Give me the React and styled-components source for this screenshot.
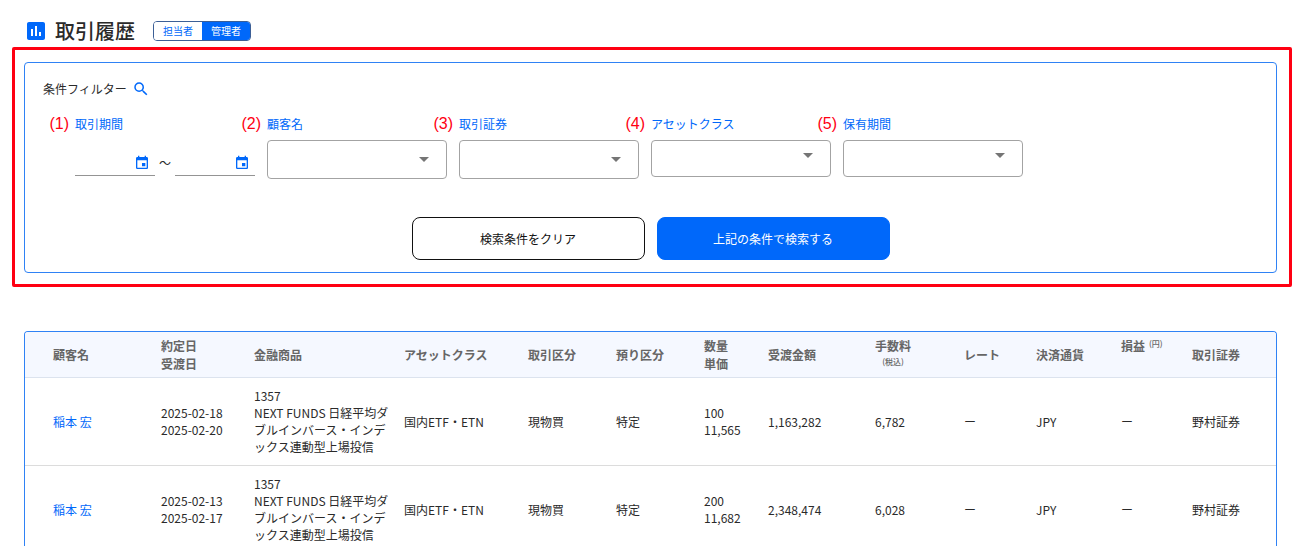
import React, { useState } from 'react';
import styled, { createGlobalStyle } from 'styled-components';
import { MdAssessment, MdSearch, MdEvent, MdArrowDropDown } from 'react-icons/md';

const SELECTS = [
  { id: 'customer', no: '(2)', label: '顧客名' },
  { id: 'broker', no: '(3)', label: '取引証券' },
  { id: 'assetClass', no: '(4)', label: 'アセットクラス', compact: true },
  { id: 'holding', no: '(5)', label: '保有期間', compact: true },
];

const COLUMNS = [128, 93, 150, 124, 88, 88, 64, 107, 89, 72, 85, 71, 92];

const TRADES = [
  {
    name: '稲本 宏',
    contractDate: '2025-02-18',
    deliveryDate: '2025-02-20',
    code: '1357',
    product: 'NEXT FUNDS 日経平均ダブルインバース・インデックス連動型上場投信',
    assetClass: '国内ETF・ETN',
    type: '現物買',
    deposit: '特定',
    quantity: '100',
    price: '11,565',
    amount: '1,163,282',
    fee: '6,782',
    rate: 'ー',
    currency: 'JPY',
    profit: 'ー',
    broker: '野村証券',
  },
  {
    name: '稲本 宏',
    contractDate: '2025-02-13',
    deliveryDate: '2025-02-17',
    code: '1357',
    product: 'NEXT FUNDS 日経平均ダブルインバース・インデックス連動型上場投信',
    assetClass: '国内ETF・ETN',
    type: '現物買',
    deposit: '特定',
    quantity: '200',
    price: '11,682',
    amount: '2,348,474',
    fee: '6,028',
    rate: 'ー',
    currency: 'JPY',
    profit: 'ー',
    broker: '野村証券',
  },
];

export default function App() {
  const [role, setRole] = useState('admin');

  return (
    <Page>
      <GlobalStyle />
      <Header>
        <MdAssessment size={24} color="#0068fa" />
        <Title>取引履歴</Title>
        <Toggle>
          <ToggleButton type="button" $active={role === 'staff'} onClick={() => setRole('staff')}>
            担当者
          </ToggleButton>
          <ToggleButton type="button" $active={role === 'admin'} onClick={() => setRole('admin')}>
            管理者
          </ToggleButton>
        </Toggle>
      </Header>
      <Frame>
        <FilterForm onSubmit={(e) => e.preventDefault()}>
          <FilterTitle>
            条件フィルター
            <MdSearch size={18} color="#0068fa" />
          </FilterTitle>
          <Fields>
            <Field>
              <Label htmlFor="dateFrom">
                <Number>(1)</Number>
                取引期間
              </Label>
              <DateRange>
                <DateInput id="dateFrom" label="開始日" />
                ～
                <DateInput id="dateTo" label="終了日" />
              </DateRange>
            </Field>
            {SELECTS.map(({ id, no, label, compact }) => (
              <Field key={id}>
                <Label htmlFor={id}>
                  <Number>{no}</Number>
                  {label}
                </Label>
                <SelectWrapper>
                  <Select id={id} $compact={compact}>
                    <option value="" />
                  </Select>
                  <Arrow size={24} $compact={compact} />
                </SelectWrapper>
              </Field>
            ))}
          </Fields>
          <Actions>
            <ActionButton type="reset">検索条件をクリア</ActionButton>
            <ActionButton type="submit" $primary>
              上記の条件で検索する
            </ActionButton>
          </Actions>
        </FilterForm>
      </Frame>
      <TableWrapper>
        <Table>
          <colgroup>
            {COLUMNS.map((width, i) => (
              <Col key={i} $width={width} />
            ))}
          </colgroup>
          <thead>
            <tr>
              <Th>顧客名</Th>
              <Th>
                約定日
                <br />
                受渡日
              </Th>
              <Th>金融商品</Th>
              <Th>アセットクラス</Th>
              <Th>取引区分</Th>
              <Th>預り区分</Th>
              <Th>
                数量
                <br />
                単価
              </Th>
              <Th>受渡金額</Th>
              <Th $top>
                <Stack>
                  手数料
                  <Small>(税込)</Small>
                </Stack>
              </Th>
              <Th>レート</Th>
              <Th>決済通貨</Th>
              <Th $top>
                <Inline>
                  損益
                  <Small>(円)</Small>
                </Inline>
              </Th>
              <Th>取引証券</Th>
            </tr>
          </thead>
          <tbody>
            {TRADES.map((trade) => (
              <tr key={trade.contractDate}>
                <Td>
                  <CustomerLink href="#customer">{trade.name}</CustomerLink>
                </Td>
                <Td>
                  {trade.contractDate}
                  <br />
                  {trade.deliveryDate}
                </Td>
                <Td>
                  {trade.code}
                  <br />
                  {trade.product}
                </Td>
                <Td>{trade.assetClass}</Td>
                <Td>{trade.type}</Td>
                <Td>{trade.deposit}</Td>
                <Td>
                  {trade.quantity}
                  <br />
                  {trade.price}
                </Td>
                <Td>{trade.amount}</Td>
                <Td>{trade.fee}</Td>
                <Td>{trade.rate}</Td>
                <Td>{trade.currency}</Td>
                <Td>{trade.profit}</Td>
                <Td>{trade.broker}</Td>
              </tr>
            ))}
          </tbody>
        </Table>
      </TableWrapper>
    </Page>
  );
}

function DateInput({ id, label }) {
  return (
    <DateBox>
      <DateText id={id} type="text" aria-label={label} />
      <DateButton type="button" aria-label={`${label}を選択`}>
        <MdEvent size={16} />
      </DateButton>
    </DateBox>
  );
}

const GlobalStyle = createGlobalStyle`
  * {
    box-sizing: border-box;
  }
  body {
    margin: 0;
    background: #fff;
    color: #2a2a2a;
    font-family: 'Noto Sans CJK JP', sans-serif;
    font-size: 12px;
    line-height: 18px;
  }
  button, input, select {
    font: inherit;
  }
`;

const Page = styled.main`
  display: flex;
  flex-direction: column;
  height: 100vh;
  padding: 14px 12px 4px;
`;

const Header = styled.header`
  display: flex;
  flex-shrink: 0;
  align-items: center;
  height: 33px;
  padding-left: 12px;
`;

const Title = styled.h1`
  margin: 0 18px 0 7px;
  font-size: 20px;
  line-height: 28px;
  font-weight: 500;
`;

const Toggle = styled.div`
  display: flex;
  height: 20px;
  border: 1px solid #3c5f96;
  border-radius: 4px;
  overflow: hidden;
`;

const ToggleButton = styled.button`
  width: 48px;
  padding: 0;
  border: none;
  font-size: 10px;
  line-height: 18px;
  cursor: pointer;
  color: ${({ $active }) => ($active ? '#fff' : '#0068fa')};
  background-color: ${({ $active }) => ($active ? '#0068fa' : '#fff')};
`;

const Frame = styled.section`
  flex-shrink: 0;
  padding: 12px 12px 11px 9px;
  border: 3px solid #ff0012;
  border-radius: 2px;
`;

const FilterForm = styled.form`
  padding: 17px 18px 12px;
  border: 1px solid #2f82f5;
  border-radius: 4px;
`;

const FilterTitle = styled.h2`
  display: flex;
  align-items: center;
  gap: 5px;
  margin: 0;
  font-size: 12px;
  font-weight: 400;
`;

const Fields = styled.div`
  display: flex;
  gap: 12px;
  margin-top: 17px;
  padding-left: 32px;
`;

const Field = styled.div`
  display: flex;
  flex-direction: column;
  align-items: flex-start;
  gap: 7px;
`;

const Label = styled.label`
  position: relative;
  color: #0068fa;
`;

const Number = styled.span`
  position: absolute;
  right: 100%;
  margin-right: 6px;
  color: #ff0012;
  font-family: 'Liberation Sans', sans-serif;
  font-size: 16px;
`;

const DateRange = styled.div`
  display: flex;
  align-items: center;
  gap: 4px;
  padding-top: 10px;
`;

const DateBox = styled.span`
  display: flex;
  align-items: center;
  width: 80px;
  height: 26px;
  padding-right: 5px;
  border-bottom: 1px solid #949494;
`;

const DateText = styled.input`
  flex: 1;
  min-width: 0;
  padding: 0;
  border: none;
  outline: none;
  background: none;
`;

const DateButton = styled.button`
  display: flex;
  padding: 0;
  border: none;
  background: none;
  color: #0068fa;
  cursor: pointer;
`;

const SelectWrapper = styled.div`
  position: relative;
`;

const Select = styled.select`
  display: block;
  width: 180px;
  height: ${({ $compact }) => ($compact ? '37px' : '39px')};
  padding: 0 36px 0 12px;
  border: 1px solid #a3a3a3;
  border-radius: 4px;
  background: #fff;
  appearance: none;
`;

const Arrow = styled(MdArrowDropDown)`
  position: absolute;
  top: ${({ $compact }) => ($compact ? '3px' : '7px')};
  right: 11px;
  color: #757575;
  pointer-events: none;
`;

const Actions = styled.div`
  display: flex;
  justify-content: center;
  gap: 12px;
  margin-top: 38px;
`;

const ActionButton = styled.button`
  width: 233px;
  height: 43px;
  border: 1px solid ${({ $primary }) => ($primary ? '#0068fa' : '#111')};
  border-radius: 8px;
  color: ${({ $primary }) => ($primary ? '#fff' : '#111')};
  background-color: ${({ $primary }) => ($primary ? '#0068fa' : '#fff')};
  cursor: pointer;
`;

const TableWrapper = styled.section`
  flex: 1;
  min-height: 0;
  margin: 44px 15px 0 12px;
  border: 1px solid #2f82f5;
  border-bottom: none;
  border-radius: 4px 4px 0 0;
  overflow: auto;
  scrollbar-width: none;
`;

const Table = styled.table`
  width: 100%;
  table-layout: fixed;
  border-collapse: collapse;
`;

const Col = styled.col`
  width: ${({ $width }) => $width}px;
`;

const Th = styled.th`
  padding: 5px 4px 4px 8px;
  border-bottom: 1px solid #dce3ee;
  background-color: #f5f8ff;
  color: #666;
  font-weight: 700;
  text-align: left;
  vertical-align: ${({ $top }) => ($top ? 'top' : 'middle')};
  &:first-child {
    padding-left: 28px;
  }
`;

const Td = styled.td`
  padding: 9px 4px 10px 8px;
  border-bottom: 1px solid #dcdcdc;
  line-height: 17px;
  &:first-child {
    padding-left: 28px;
  }
`;

const Stack = styled.span`
  display: inline-flex;
  flex-direction: column;
  align-items: center;
  vertical-align: top;
`;

const Inline = styled.span`
  display: flex;
  gap: 4px;
`;

const Small = styled.span`
  font-size: 8px;
  line-height: 14px;
  font-weight: 500;
`;

const CustomerLink = styled.a`
  color: #0068fa;
  text-decoration: none;
`;
